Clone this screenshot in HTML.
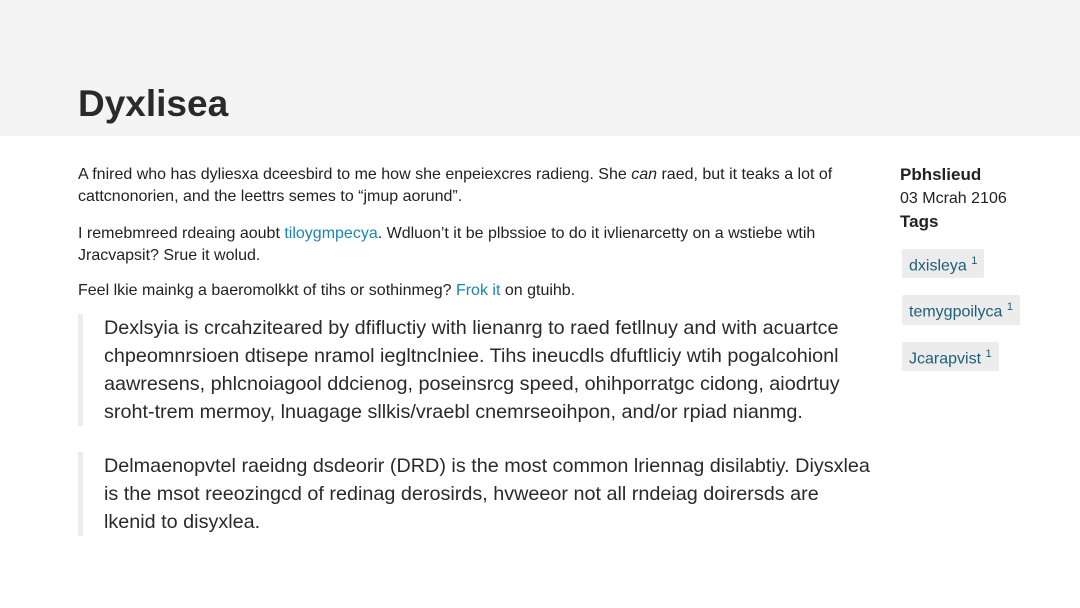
<!DOCTYPE html>
<html><head><meta charset="utf-8"><style>
body{margin:0;width:1080px;height:608px;background:#fff;font-family:"Liberation Sans",sans-serif;color:#222;position:relative;overflow:hidden}
.hdr{position:absolute;left:0;top:0;width:1080px;height:136px;background:#f4f4f4}
h1{position:absolute;left:78px;top:82px;margin:0;font-size:37px;font-weight:bold;color:#2a2a2a;line-height:44px}
.main{position:absolute;left:78px;top:164px;width:800px;font-size:16px;line-height:22px}
.main p{margin:0 0 15px}
a{color:#1a85b0;text-decoration:none}
blockquote{margin:0 0 26px;border-left:5px solid #ececec;padding-left:21px;font-size:19.8px;line-height:28px;color:#2a2a2a;white-space:nowrap}
.side{position:absolute;left:900px;top:163px;font-size:16px;line-height:23px}
.tag{display:inline-block;background:#ececec;color:#1d5f7a;padding:2px 7px 2px;border-radius:2px;font-size:16px;line-height:21px;margin:0 0 17px 2px}
.tag sup{font-size:11px;color:#1d5f7a}
</style></head><body>
<div class="hdr"></div>
<h1>Dyxlisea</h1>
<div class="main">
<p>A fnired who has dyliesxa dceesbird to me how she enpeiexcres radieng. She <i>can</i> raed, but it teaks a lot of cattcnonorien, and the leettrs semes to “jmup aorund”.</p>
<p style="margin-bottom:13px">I remebmreed rdeaing aoubt <a>tiloygmpecya</a>. Wdluon’t it be plbssioe to do it ivlienarcetty on a wstiebe wtih Jracvapsit? Srue it wolud.</p>
<p style="margin-bottom:12px">Feel lkie mainkg a baeromolkkt of tihs or sothinmeg? <a>Frok it</a> on gtuihb.</p>
<blockquote>Dexlsyia is crcahziteared by dfifluctiy with lienanrg to raed fetllnuy and with acuartce<br>chpeomnrsioen dtisepe nramol iegltnclniee. Tihs ineucdls dfuftliciy wtih pogalcohionl<br>aawresens, phlcnoiagool ddcienog, poseinsrcg speed, ohihporratgc cidong, aiodrtuy<br>sroht-trem mermoy, lnuagage sllkis/vraebl cnemrseoihpon, and/or rpiad nianmg.</blockquote>
<blockquote>Delmaenopvtel raeidng dsdeorir (DRD) is the most common lriennag disilabtiy. Diysxlea<br>is the msot reeozingcd of redinag derosirds, hvweeor not all rndeiag doirersds are<br>lkenid to disyxlea.</blockquote>
</div>
<div class="side">
<b style="font-size:17px">Pbhslieud</b><br>03 Mcrah 2106<br><b style="font-size:17px">Tags</b>
<div style="margin-top:15px">
<span class="tag">dxisleya <sup>1</sup></span><br>
<span class="tag">temygpoilyca <sup>1</sup></span><br>
<span class="tag">Jcarapvist <sup>1</sup></span>
</div></div>
</body></html>
